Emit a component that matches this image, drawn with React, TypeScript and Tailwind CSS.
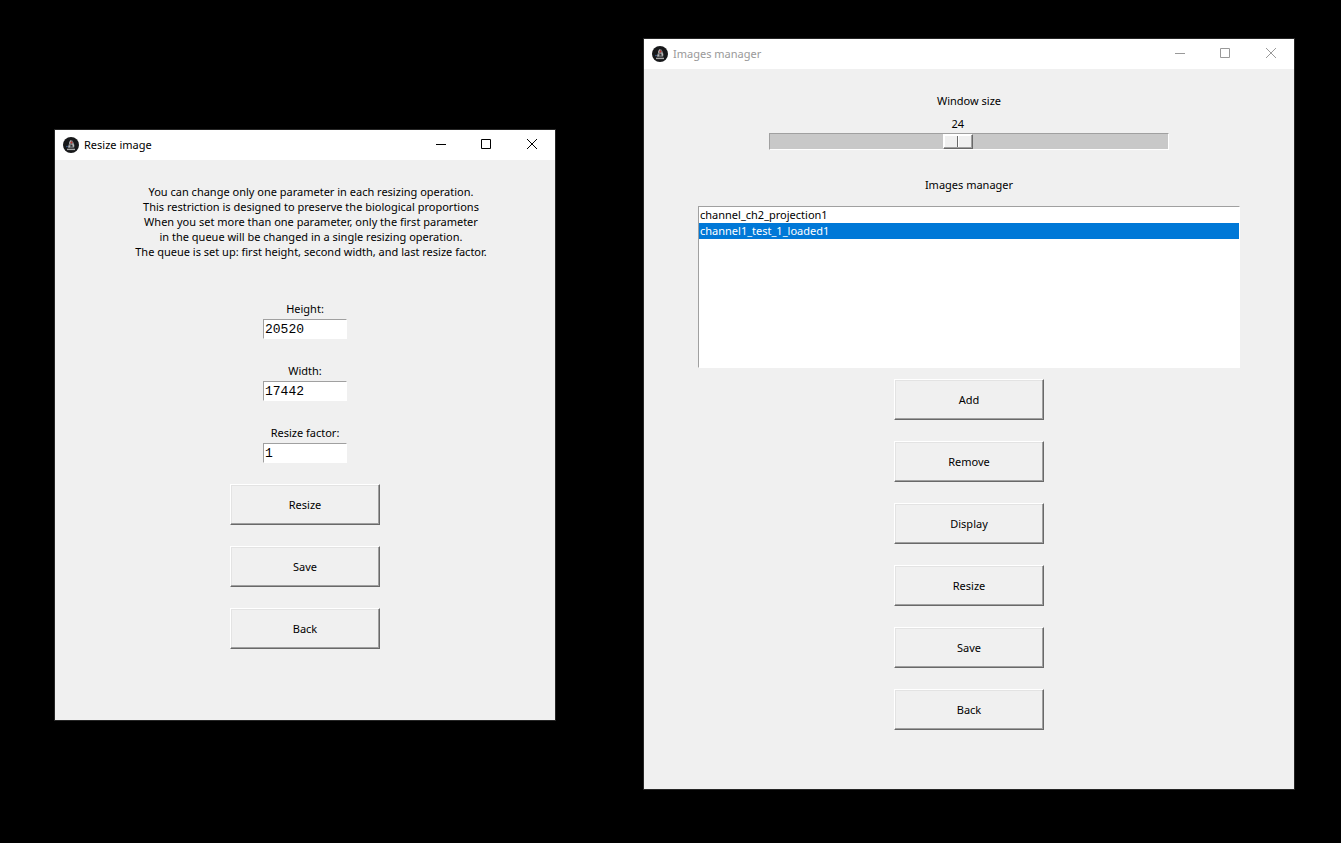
import { useId, useState, type ReactNode } from "react";

function AppIcon() {
  return (
    <svg viewBox="0 0 16 16" className="size-4 shrink-0" aria-hidden="true">
      <circle cx="8" cy="8" r="8" fill="#17181a" />
      <path d="M7.4 3.2h1.8l1.5 2.6.8 2.6-.4 2.4H5.4l-.6-1.2.9-2.2z" fill="#77787a" />
      <path d="M4 12.4h8" stroke="#a9a9a9" strokeWidth="1.4" />
      <path d="M7.4 3.6l-.8 3M9.8 6.6l.8 3M6.4 8.6l-.4 2" stroke="#cfcfcf" strokeWidth="1" />
      <path d="M7.6 8h1.6v1.6H7.6z" fill="#303133" />
      <circle cx="8.4" cy="5.4" r="1" fill="#c4332d" />
      <circle cx="4" cy="9.6" r=".8" fill="#44679c" />
    </svg>
  );
}

const glyphs = {
  Minimize: "M1 5.5H11",
  Maximize: "M.5 .5H9.5V9.5H.5Z",
  Close: "M0 0L10 10M10 0L0 10",
};

type WindowProps = {
  title: string;
  active?: boolean;
  className: string;
  children: ReactNode;
};

function Window({ title, active = false, className, children }: WindowProps) {
  const tone = active ? "text-black" : "text-[#999999]";
  return (
    <section aria-label={title} className={`flex w-full flex-col border border-[#262626] bg-[#f0f0f0] ${className}`}>
      <header className={`flex h-[30px] items-center bg-white pl-2 ${tone}`}>
        <AppIcon />
        <h1 className="ml-[5px] grow truncate pb-[2px]">{title}</h1>
        {Object.entries(glyphs).map(([name, d]) => (
          <button key={name} type="button" aria-label={name} className="flex h-full w-[46px] items-center justify-center pb-[2px]">
            <svg viewBox="0 0 10 10" className="size-[10px] overflow-visible" fill="none" stroke="currentColor">
              <path d={d} />
            </svg>
          </button>
        ))}
      </header>
      {children}
    </section>
  );
}

function PushButton({ children }: { children: ReactNode }) {
  return (
    <button
      type="button"
      className="h-[41px] w-[150px] border border-t-white border-r-[#696969] border-b-[#696969] border-l-white shadow-[inset_-1px_-1px_0_#a0a0a0,inset_1px_1px_0_#e3e3e3]"
    >
      {children}
    </button>
  );
}

function Field({ label, initial }: { label: string; initial: string }) {
  const id = useId();
  const [value, setValue] = useState(initial);
  return (
    <div className="flex flex-col items-center gap-[3px]">
      <label htmlFor={id}>{label}</label>
      <input
        id={id}
        type="text"
        value={value}
        onChange={(e) => setValue(e.target.value)}
        className="h-5 w-[84px] border border-t-[#a0a0a0] border-r-white border-b-white border-l-[#a0a0a0] bg-white px-px font-['Liberation_Mono',monospace] text-[13px] outline-none"
      />
    </div>
  );
}

function ResizeWindow() {
  return (
    <Window title="Resize image" active className="mt-[129px] max-w-[502px]">
      <div className="flex flex-col items-center pt-6 pb-[71px]">
        <p className="pl-3 text-center">
          You can change only one parameter in each resizing operation.
          <br />
          This restriction is designed to preserve the biological proportions
          <br />
          When you set more than one parameter, only the first parameter
          <br />
          in the queue will be changed in a single resizing operation.
          <br />
          The queue is set up: first height, second width, and last resize factor.
        </p>
        <div className="mt-[42px] flex flex-col gap-6">
          <Field label="Height:" initial="20520" />
          <Field label="Width:" initial="17442" />
          <Field label="Resize factor:" initial="1" />
        </div>
        <div className="mt-[21px] flex flex-col gap-[21px]">
          <PushButton>Resize</PushButton>
          <PushButton>Save</PushButton>
          <PushButton>Back</PushButton>
        </div>
      </div>
    </Window>
  );
}

const MIN = 1;
const MAX = 50;

function ManagerWindow() {
  const [size, setSize] = useState(24);
  const [selected, setSelected] = useState("channel1_test_1_loaded1");
  const fraction = (size - MIN) / (MAX - MIN);
  return (
    <Window title="Images manager" className="mt-[38px] max-w-[652px]">
      <div className="flex flex-col items-center px-[54px] pt-6 pb-[59px]">
        <label htmlFor="window-size">Window size</label>
        <div className="mt-2 flex w-full max-w-[400px] flex-col gap-[2px]">
          <output
            htmlFor="window-size"
            className="block w-[30px] text-center"
            style={{ marginLeft: `calc((100% - 30px) * ${fraction})` }}
          >
            {size}
          </output>
          <input
            id="window-size"
            type="range"
            min={MIN}
            max={MAX}
            value={size}
            onChange={(e) => setSize(Number(e.target.value))}
            className="h-[17px] w-full appearance-none border border-t-[#a0a0a0] border-r-white border-b-white border-l-[#a0a0a0] bg-[#c8c8c8] outline-none [&::-webkit-slider-thumb]:h-[15px] [&::-webkit-slider-thumb]:w-[30px] [&::-webkit-slider-thumb]:appearance-none [&::-webkit-slider-thumb]:border [&::-webkit-slider-thumb]:border-t-white [&::-webkit-slider-thumb]:border-r-[#696969] [&::-webkit-slider-thumb]:border-b-[#696969] [&::-webkit-slider-thumb]:border-l-white [&::-webkit-slider-thumb]:bg-[linear-gradient(to_right,#f0f0f0_13px,#696969_13px,#696969_14px,#ffffff_14px,#ffffff_15px,#f0f0f0_15px)] [&::-webkit-slider-thumb]:shadow-[inset_-1px_-1px_0_#a0a0a0,inset_1px_1px_0_#ffffff]"
          />
        </div>
        <label htmlFor="image-list" className="mt-[27px]">
          Images manager
        </label>
        <select
          id="image-list"
          size={10}
          value={selected}
          onChange={(e) => setSelected(e.target.value)}
          className="mt-[14px] h-[162px] w-full appearance-none overflow-hidden rounded-none border border-t-[#a0a0a0] border-r-white border-b-white border-l-[#a0a0a0] bg-white p-0 outline-none"
        >
          {["channel_ch2_projection1", "channel1_test_1_loaded1"].map((name) => (
            <option
              key={name}
              value={name}
              className="h-4 min-h-4 p-0 pl-px leading-4 text-black checked:bg-[linear-gradient(#0078d7,#0078d7)] checked:[-webkit-text-fill-color:#ffffff]"
            >
              {name}
            </option>
          ))}
        </select>
        <div className="mt-[11px] flex flex-col gap-[21px]">
          {["Add", "Remove", "Display", "Resize", "Save", "Back"].map((name) => (
            <PushButton key={name}>{name}</PushButton>
          ))}
        </div>
      </div>
    </Window>
  );
}

export default function App() {
  return (
    <main className="flex min-h-screen items-start gap-[87px] bg-black pr-[46px] pb-[53px] pl-[54px] font-['Noto_Sans','Open_Sans',sans-serif] text-[11px] leading-[15px] text-black">
      <ResizeWindow />
      <ManagerWindow />
    </main>
  );
}
